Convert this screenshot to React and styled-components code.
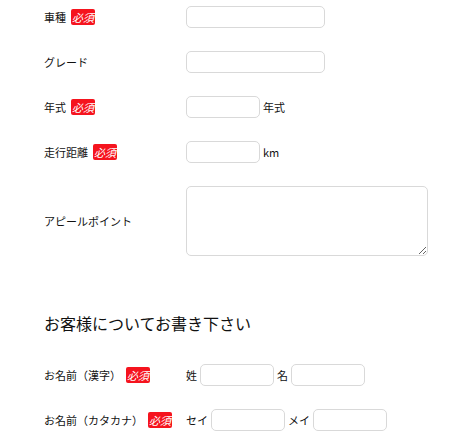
import React from "react";
import styled, { createGlobalStyle } from "styled-components";

const GlobalStyle = createGlobalStyle`
  body {
    margin: 0;
    background: #fff;
    font-family: "Noto Sans CJK JP", "Noto Sans", sans-serif;
    color: #111;
  }
`;

const Page = styled.div`
  padding: 6px 0 0 44px;
`;

const Form = styled.div`
  display: flex;
  flex-direction: column;
  gap: 23px;
`;

const Row = styled.div`
  display: grid;
  grid-template-columns: 142px 1fr;
  align-items: center;
`;

const Label = styled.div`
  display: flex;
  align-items: center;
  gap: 5px;
  font-size: 11px;
  line-height: 16px;
`;

const Required = styled.span`
  display: inline-block;
  width: 24px;
  height: 16px;
  line-height: 16px;
  text-align: center;
  background: #f5141e;
  color: #fff;
  font-size: 11px;
  font-style: italic;
  border-radius: 2px;
`;

const Field = styled.div`
  display: flex;
  align-items: center;
  gap: 3px;
  font-size: 11px;
`;

const Input = styled.input`
  box-sizing: border-box;
  width: ${({ $w }) => $w}px;
  height: 22px;
  border: 1px solid #d9d9d9;
  border-radius: 5px;
  background: #fff;
  padding: 0 6px;
  margin: 0;
  outline: none;
`;

const TextArea = styled.textarea`
  box-sizing: border-box;
  width: 242px;
  height: 70px;
  border: 1px solid #d9d9d9;
  border-radius: 5px;
  margin: 0;
  display: block;
  outline: none;
`;

const Heading = styled.h2`
  margin: 55px 0 29px;
  font-size: 16px;
  font-weight: normal;
  line-height: 24px;
  color: #111;
`;

const carRows = [
  { label: "車種", req: true, width: 139 },
  { label: "グレード", req: false, width: 139 },
  { label: "年式", req: true, width: 74, unit: "年式" },
  { label: "走行距離", req: true, width: 74, unit: "km" },
];

export default function App() {
  return (
    <Page>
      <GlobalStyle />
      <Form>
        {carRows.map((r) => (
          <Row key={r.label}>
            <Label>
              {r.label}
              {r.req && <Required>必須</Required>}
            </Label>
            <Field>
              <Input $w={r.width} />
              {r.unit && <span>{r.unit}</span>}
            </Field>
          </Row>
        ))}
        <Row>
          <Label>アピールポイント</Label>
          <TextArea />
        </Row>
      </Form>

      <Heading>お客様についてお書き下さい</Heading>

      <Form>
        <Row>
          <Label>
            お名前（漢字）<Required>必須</Required>
          </Label>
          <Field>
            <span>姓</span>
            <Input $w={74} />
            <span>名</span>
            <Input $w={74} />
          </Field>
        </Row>
        <Row>
          <Label>
            お名前（カタカナ）<Required>必須</Required>
          </Label>
          <Field>
            <span>セイ</span>
            <Input $w={74} />
            <span>メイ</span>
            <Input $w={74} />
          </Field>
        </Row>
      </Form>
    </Page>
  );
}
